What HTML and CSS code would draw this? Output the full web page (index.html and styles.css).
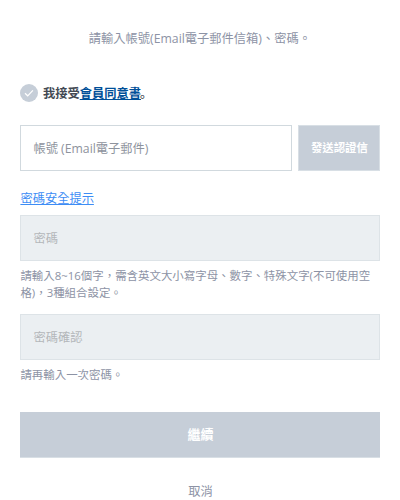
FILE: index.html
```html
<!DOCTYPE html>
<html lang="zh-Hant">
<head>
  <meta charset="UTF-8" />
  <meta name="viewport" content="width=device-width, initial-scale=1.0" />
  <title>會員註冊</title>
  <link rel="stylesheet" href="styles.css">
</head>
<body>
  <form class="signup">
    <p class="intro">請輸入帳號(Email電子郵件信箱)、密碼。</p>

    <div class="agree">
      <svg class="check" viewBox="0 0 18 18">
        <circle cx="9" cy="9" r="9" fill="#c6ced8" />
        <path d="M5 9.2l2.7 2.6 5.2-5.4" fill="none" stroke="#fff" stroke-width="1.2" />
      </svg>
      <span class="agree-text">我接受<a class="terms" href="#">會員同意書</a><span lang="zh-Hans">。</span></span>
    </div>

    <div class="account">
      <input class="field" type="text" placeholder="帳號 (Email電子郵件)">
      <button class="send" type="button">發送認證信</button>
    </div>

    <a class="tips" href="#">密碼安全提示</a>

    <input class="field" type="password" placeholder="密碼" disabled>
    <p class="help">請輸入8~16個字，需含英文大小寫字母、數字、特殊文字(不可使用空格)，3種組合設定。</p>

    <input class="field confirm" type="password" placeholder="密碼確認" disabled>
    <p class="help">請再輸入一次密碼。</p>

    <button class="submit" type="button">繼續</button>
    <a class="cancel" href="#">取消</a>
  </form>
</body>
</html>
```

FILE: styles.css
```css
* {
  box-sizing: border-box;
}

body {
  margin: 0;
  background: #fff;
  color: #8d93a5;
  font-family: "Open Sans", "Noto Sans CJK TC", sans-serif;
  font-size: 12.25px;
  line-height: 18px;
  overflow: hidden;
}

.signup {
  display: flex;
  flex-direction: column;
  width: 400px;
  padding: 30px 19.6px 0 20.4px;
}

p {
  margin: 0;
}

.intro {
  margin-left: -1px;
  text-align: center;
}

.agree {
  display: flex;
  align-items: center;
  gap: 4.6px;
  height: 18px;
  margin-top: 36px;
}

.check {
  width: 18px;
  height: 18px;
}

.agree-text {
  color: #434a54;
  font-weight: 600;
}

.agree-text span {
  margin-left: -1px;
  font-family: "Noto Sans CJK SC", sans-serif;
  font-weight: 500;
}

.terms {
  color: #004f98;
}

.account {
  display: flex;
  gap: 6px;
  margin-top: 23px;
}

.field {
  width: 100%;
  height: 46px;
  padding: 0 12px;
  border: 1px solid #d1d9de;
  border-radius: 0;
  background: #fff;
  font: inherit;
}

.field::placeholder {
  color: #8e939d;
}

.field:disabled {
  border-color: #dde3e7;
  background: #ebeff2;
}

.field:disabled::placeholder {
  color: #b4b7ba;
}

.send,
.submit {
  border: 1px solid #d8dfe5;
  background: #c6ced8;
  color: #fff;
  font: inherit;
  font-weight: 700;
}

.send {
  flex: 0 0 82px;
  padding: 0;
  font-size: 11.4px;
}

.tips {
  align-self: flex-start;
  margin: 19px 0 7px;
  color: #3d8df5;
}

.help {
  margin-top: 6px;
  font-size: 11.44px;
  line-height: 17px;
}

.confirm {
  margin-top: 13px;
}

.submit {
  height: 46px;
  margin-top: 29px;
  padding-bottom: 2px;
  border-width: 0 0 1px;
  font-size: 13px;
}

.cancel {
  align-self: center;
  margin-top: 25px;
  color: #8d93a5;
  text-decoration: none;
}
```
